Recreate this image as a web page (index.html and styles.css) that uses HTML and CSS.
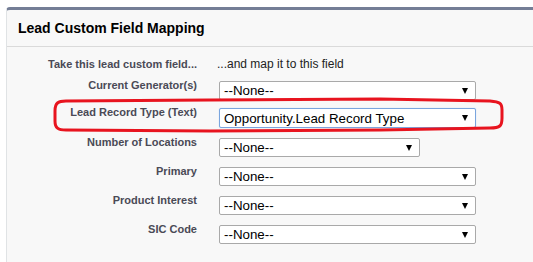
FILE: index.html
```html
<!DOCTYPE html>
<html lang="en">
<head>
    <meta charset="UTF-8">
    <title>Lead Custom Field Mapping</title>
    <link rel="stylesheet" href="styles.css">
</head>
<body>
    <div class="panel">
        <div class="panel-header">
            <h2>Lead Custom Field Mapping</h2>
        </div>
        <div class="panel-body">
            <div class="row row-head">
                <div class="label">Take this lead custom field...</div>
                <div class="value head-text">...and map it to this field</div>
            </div>
            <div class="row row-first">
                <div class="label">Current Generator(s)</div>
                <div class="value"><div class="select wide"><span>--None--</span><i class="arrow"></i></div></div>
            </div>
            <div class="row">
                <div class="label">Lead Record Type (Text)</div>
                <div class="value"><div class="select wide focused"><span>Opportunity.Lead Record Type</span><i class="arrow"></i></div></div>
            </div>
            <div class="row">
                <div class="label">Number of Locations</div>
                <div class="value"><div class="select narrow"><span>--None--</span><i class="arrow"></i></div></div>
            </div>
            <div class="row">
                <div class="label">Primary</div>
                <div class="value"><div class="select wide"><span>--None--</span><i class="arrow"></i></div></div>
            </div>
            <div class="row">
                <div class="label">Product Interest</div>
                <div class="value"><div class="select wide"><span>--None--</span><i class="arrow"></i></div></div>
            </div>
            <div class="row">
                <div class="label">SIC Code</div>
                <div class="value"><div class="select wide"><span>--None--</span><i class="arrow"></i></div></div>
            </div>
        </div>
    </div>

    <!-- red marker drawn round the record type row -->
    <svg class="annotation" width="533" height="262" viewBox="0 0 533 262">
        <path d="M66 101 C58 101 55 103 55 111 L55 121 C55 128 58 130 66 130 L210 131 L380 130 L490 128 C500 128 502 126 502 118 L502 110 C502 103 500 102 490 101 L380 99 L210 100 Z"
              fill="none" stroke="#e8141f" stroke-width="3" stroke-linejoin="round"/>
    </svg>
</body>
</html>
```

FILE: styles.css
```css
body {
    margin: 0;
    font-family: "Liberation Sans", Arial, sans-serif;
    background-color: #fff;
    position: relative;
    height: 262px;
    overflow: hidden;
}
.panel {
    margin: 7px 0 0 6px;
    border-top: 3px solid #747e96;
    border-left: 1px solid #e0e3e5;
    border-top-left-radius: 4px;
    background-color: #f8f8f8;
    height: 260px;
}
.panel-header {
    height: 36px;
    border-bottom: 1px solid #dadada;
    display: flex;
    align-items: center;
    padding-left: 11px;
}
.panel-header h2 {
    margin: 0;
    font-size: 14px;
    font-weight: bold;
    color: #000;
}
.panel-body {
    padding-top: 11px;
}
.row {
    display: grid;
    grid-template-columns: 190px 1fr;
    column-gap: 20px;
    align-items: start;
    margin-bottom: 10px;
}
.row-first {
    margin-bottom: 8px;
}
.label {
    text-align: right;
    font-size: 11px;
    font-weight: bold;
    color: #4a4a56;
    line-height: 13px;
    margin-top: -2px;
}
.row-head .label {
    margin-top: 0;
}
.head-text {
    font-size: 12px;
    line-height: 13px;
    color: #222;
}
.select {
    box-sizing: border-box;
    height: 19px;
    margin-left: 2px;
    padding: 0 7px 0 4px;
    border: 1px solid #a9a9a9;
    border-radius: 2px;
    background-color: #fff;
    display: flex;
    align-items: center;
    justify-content: space-between;
    font-size: 13.33px;
    color: #000;
}
.wide {
    width: 257px;
}
.narrow {
    width: 201px;
}
.focused {
    height: 20px;
    border-color: #7aa5de;
    box-shadow: 0 0 1px #a9c6ee;
}
.arrow {
    width: 0;
    height: 0;
    border-left: 3.5px solid transparent;
    border-right: 3.5px solid transparent;
    border-top: 6px solid #000;
}
.annotation {
    position: absolute;
    left: 0;
    top: 0;
    pointer-events: none;
}
```
